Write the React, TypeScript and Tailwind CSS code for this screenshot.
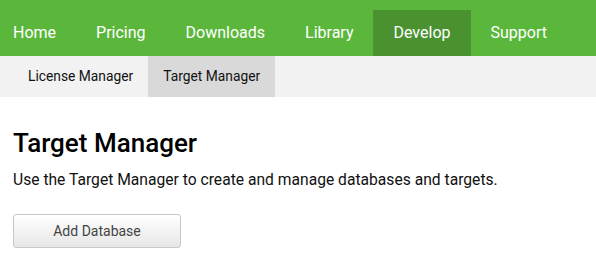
export default function App() {
  const items = ["Home", "Pricing", "Downloads", "Library", "Develop", "Support"];
  return (
    <div className="w-[596px] h-[268px] bg-white" style={{ fontFamily: "Roboto, 'Liberation Sans', sans-serif" }}>
      <nav className="bg-[#5bb73c] h-[56px] flex items-end">
        {items.map((it, i) => (
          <div
            key={it}
            className={`h-[46px] flex items-center text-[16px] text-white ${i === 0 ? "pl-[13px] pr-5" : "px-5"} ${it === "Develop" ? "bg-[#4a9230]" : ""}`}
          >
            {it}
          </div>
        ))}
      </nav>
      <div className="bg-[#f2f2f2] h-[41px] flex pl-[13px]">
        <div className="px-[15px] flex items-center text-[13.8px] text-[#111]">License Manager</div>
        <div className="px-[15px] flex items-center text-[13.8px] text-[#111] bg-[#d9d9d9]">Target Manager</div>
      </div>
      <div className="px-[13px]">
        <h1 className="mt-[30px] text-[26px] font-medium text-black leading-[32px]">Target Manager</h1>
        <p className="mt-[11px] text-[15.65px] text-[#111] leading-[20px] whitespace-nowrap">Use the Target Manager to create and manage databases and targets.</p>
        <button className="mt-[24px] w-[168px] h-[34px] border border-[#c8c8c8] rounded-[3px] bg-gradient-to-b from-white to-[#e6e6e6] text-[14px] text-[#444]">Add Database</button>
      </div>
    </div>
  );
}
